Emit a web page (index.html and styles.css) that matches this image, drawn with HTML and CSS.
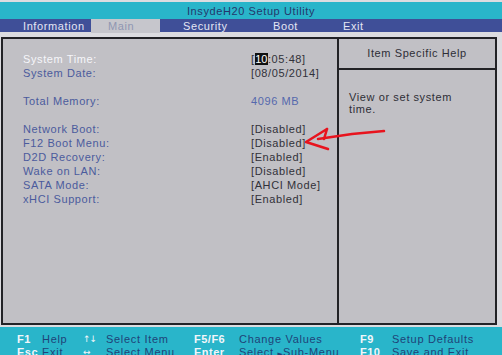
FILE: index.html
```html
<!DOCTYPE html>
<html lang="en">
<head>
    <meta charset="UTF-8">
    <meta name="viewport" content="width=device-width, initial-scale=1.0">
    <title>InsydeH20 Setup Utility</title>
    <link rel="stylesheet" href="styles.css">
</head>
<body>

    <div class="screen">
        <header class="title">InsydeH20 Setup Utility</header>

        <nav class="menu">
            <span class="tab">Information</span>
            <span class="tab active">Main</span>
            <span class="tab tab-security">Security</span>
            <span class="tab">Boot</span>
            <span class="tab">Exit</span>
        </nav>

        <main class="panel">
            <section class="settings">
                <div class="row selected">
                    <span class="label">System Time:</span>
                    <span class="value">[<span class="cursor">10</span>:05:48]</span>
                </div>
                <div class="row">
                    <span class="label">System Date:</span>
                    <span class="value">[08/05/2014]</span>
                </div>
                <div class="row blank"></div>
                <div class="row">
                    <span class="label">Total Memory:</span>
                    <span class="value info">4096 MB</span>
                </div>
                <div class="row blank"></div>
                <div class="row">
                    <span class="label">Network Boot:</span>
                    <span class="value">[Disabled]</span>
                </div>
                <div class="row">
                    <span class="label">F12 Boot Menu:</span>
                    <span class="value">[Disabled]</span>
                </div>
                <div class="row">
                    <span class="label">D2D Recovery:</span>
                    <span class="value">[Enabled]</span>
                </div>
                <div class="row">
                    <span class="label">Wake on LAN:</span>
                    <span class="value">[Disabled]</span>
                </div>
                <div class="row">
                    <span class="label">SATA Mode:</span>
                    <span class="value">[AHCI Mode]</span>
                </div>
                <div class="row">
                    <span class="label">xHCI Support:</span>
                    <span class="value">[Enabled]</span>
                </div>
            </section>

            <aside class="help">
                <div class="help-title">Item Specific Help</div>
                <div class="help-body">View or set system<br>time.</div>
            </aside>
        </main>

        <footer class="keys">
            <span class="key">F1</span><span class="desc">Help</span>
            <span class="key arrow">&uarr;&darr;</span><span class="desc">Select Item</span>
            <span class="key">F5/F6</span><span class="desc">Change Values</span>
            <span class="key">F9</span><span class="desc">Setup Defaults</span>

            <span class="key">Esc</span><span class="desc">Exit</span>
            <span class="key arrow">&harr;</span><span class="desc">Select Menu</span>
            <span class="key">Enter</span><span class="desc">Select <span class="tri">&#9658;</span>Sub-Menu</span>
            <span class="key">F10</span><span class="desc">Save and Exit</span>
        </footer>

        <!-- hand drawn marker pointing at F12 Boot Menu -->
        <svg class="marker" width="502" height="355" viewBox="0 0 502 355">
            <path d="M384 131 L352 134 L318 139" />
            <path d="M327 129 L306 142 L328 149" />
            <path d="M327 129 L324 139" />
        </svg>
    </div>

</body>
</html>
```

FILE: styles.css
```css
* {
    box-sizing: border-box;
}
body {
    margin: 0;
    background-color: #dcdce0;
    font-family: "Liberation Sans", Arial, sans-serif;
    font-size: 11px;
    letter-spacing: 0.6px;
}
.screen {
    position: relative;
    width: 502px;
    height: 355px;
    overflow: hidden;
    padding-top: 2px;
}
.title {
    height: 17px;
    padding-top: 2px;
    line-height: 15px;
    text-align: center;
    background-color: #29b5ca;
    color: #24386a;
}
.menu {
    display: grid;
    grid-template-columns: 85px 69px 96px 70px 1fr;
    height: 13px;
    padding-left: 6px;
    line-height: 14px;
    background-color: #3f4f98;
    color: #e4e6f4;
}
.tab {
    padding-left: 17px;
}
.tab-security {
    padding-left: 23px;
}
.tab.active {
    background-color: #c6c6cc;
    color: #9096b2;
}
.panel {
    display: flex;
    width: 496px;
    height: 288px;
    margin: 5px 0 2px 1px;
    background-color: #c1c0c5;
    border: 2px solid #222226;
}
.settings {
    width: 334px;
    padding: 13px 0 0 20px;
}
.row {
    display: grid;
    grid-template-columns: 228px 1fr;
    height: 14px;
    line-height: 14px;
}
.label {
    color: #4b5b9d;
}
.selected .label {
    color: #f6f6fa;
}
.value {
    color: #313139;
}
.value.info {
    color: #5568ad;
}
.cursor {
    background-color: #111;
    color: #fff;
    letter-spacing: 0;
    padding: 0 0.5px;
}
.help {
    flex: 1;
    border-left: 2px solid #222226;
}
.help-title {
    height: 31px;
    line-height: 29px;
    text-align: center;
    color: #2e2e36;
    border-bottom: 2px solid #222226;
}
.help-body {
    padding: 21px 0 0 10px;
    line-height: 12px;
    color: #2e2e36;
}
.keys {
    display: grid;
    grid-template-columns: 25px 41px 23px 88px 45px 121px 32px 1fr;
    height: 28px;
    padding: 6px 0 0 17px;
    line-height: 13px;
    background-color: #29b5ca;
    letter-spacing: 0.7px;
}
.key {
    color: #f2f6fa;
    font-weight: bold;
    letter-spacing: 0.5px;
}
.key.arrow {
    font-weight: normal;
    font-family: "DejaVu Sans", sans-serif;
    font-size: 9px;
    letter-spacing: -1px;
}
.desc {
    color: #1f4378;
}
.tri {
    font-family: "DejaVu Sans", sans-serif;
    font-size: 7px;
    letter-spacing: 0;
}
.marker {
    position: absolute;
    top: 0;
    left: 0;
    pointer-events: none;
}
.marker path {
    fill: none;
    stroke: #e8141e;
    stroke-width: 2.5;
    stroke-linecap: round;
    stroke-linejoin: round;
}
```
